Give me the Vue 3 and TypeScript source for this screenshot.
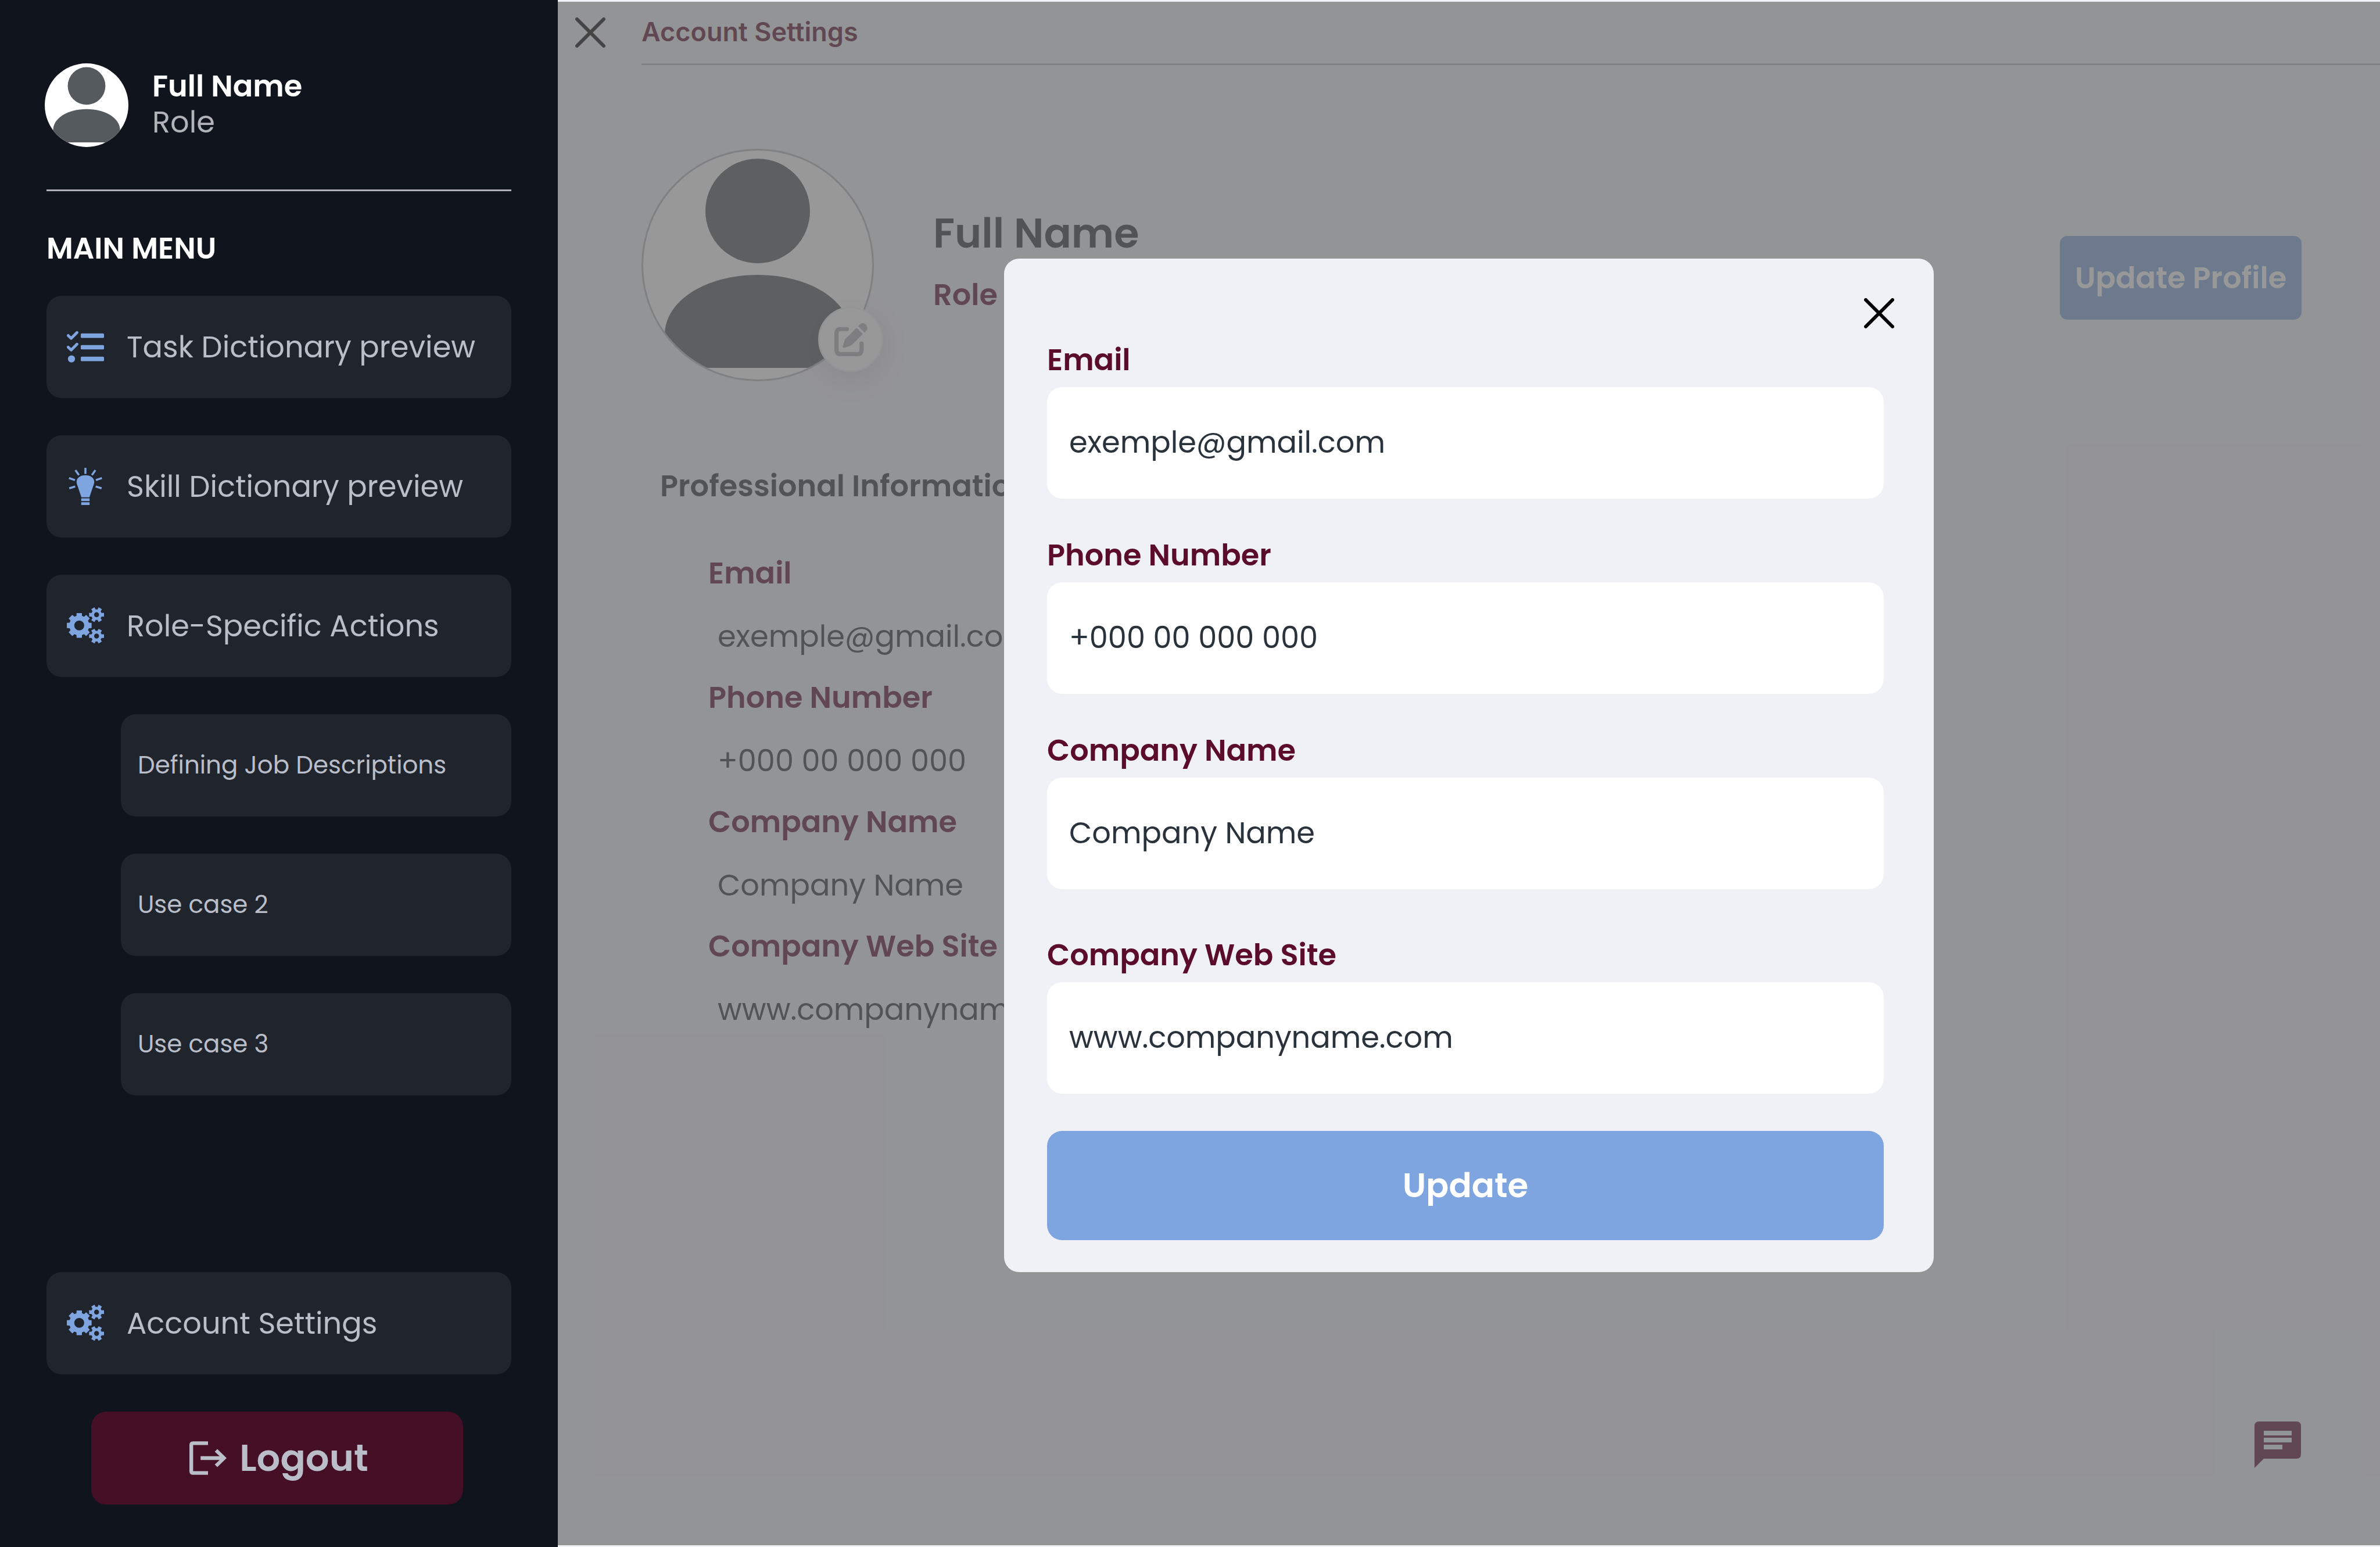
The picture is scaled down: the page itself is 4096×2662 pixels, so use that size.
<script setup lang="ts">
import { ref } from 'vue'

interface Field {
  id: string
  label: string
  type: string
  value: string
}

const fields = ref<Field[]>([
  { id: 'email', label: 'Email', type: 'email', value: 'exemple@gmail.com' },
  { id: 'phone', label: 'Phone Number', type: 'tel', value: '+000 00 000 000' },
  { id: 'company', label: 'Company Name', type: 'text', value: 'Company Name' },
  { id: 'website', label: 'Company Web Site', type: 'text', value: 'www.companyname.com' },
])

const useCases: string[] = ['Defining Job Descriptions', 'Use case 2', 'Use case 3']

// Outline of a cog wheel with a round hole, teeth spread evenly from the right-hand side.
function gear(
  cx: number, cy: number, teeth: number, outer: number, inner: number,
  hole: number, tip: number, base: number,
): string {
  const at = (r: number, deg: number): string => {
    const a = (deg * Math.PI) / 180
    return `${(cx + r * Math.cos(a)).toFixed(2)} ${(cy + r * Math.sin(a)).toFixed(2)}`
  }
  const points: string[] = []
  for (let i = 0; i < teeth; i++) {
    const mid = (360 / teeth) * i
    points.push(at(inner, mid - base), at(outer, mid - tip), at(outer, mid + tip), at(inner, mid + base))
  }
  return `M${points.join('L')}ZM${cx - hole} ${cy}a${hole} ${hole} 0 1 0 ${2 * hole} 0a${hole} ${hole} 0 1 0 ${-2 * hole} 0Z`
}

const gearsPath: string = [
  gear(26.7, 39, 8, 27.2, 21.5, 10.7, 12, 16),
  gear(64, 16, 6, 16.5, 11.5, 5.3, 14, 20),
  gear(64, 62, 6, 16.5, 11.5, 5.3, 14, 20),
].join('')
</script>

<template>
  <div class="layout">
    <aside class="sidebar">
      <div class="user">
        <svg class="user-avatar" viewBox="0 0 400 400" aria-hidden="true">
          <defs>
            <clipPath id="user-clip"><circle cx="200" cy="200" r="200" /></clipPath>
          </defs>
          <circle cx="200" cy="200" r="200" fill="#fff" />
          <g clip-path="url(#user-clip)" fill="#545a5e">
            <circle cx="200" cy="108" r="90" />
            <path d="M40 320C40 262 110 219 200 219S360 262 360 320V378H40Z" />
          </g>
        </svg>
        <div class="user-text">
          <p class="user-name">Full Name</p>
          <p class="user-role">Role</p>
        </div>
      </div>

      <hr class="divider" />
      <h2 class="menu-title">MAIN MENU</h2>

      <nav class="menu">
        <a class="item" href="#tasks">
          <svg class="icon" viewBox="0 0 80 80" aria-hidden="true">
            <g fill="none" stroke="currentColor" stroke-width="6" stroke-linejoin="round" stroke-linecap="round">
              <path d="M3 15.500L9.300 21.500L21.800 9" />
              <path d="M3 40.500L9.300 46.500L21.800 34" />
            </g>
            <g fill="currentColor">
              <circle cx="10" cy="65.700" r="7.700" />
              <rect x="30" y="11" width="50" height="9.600" rx="2" />
              <rect x="30" y="35.800" width="50" height="9.600" rx="2" />
              <rect x="30" y="61" width="50" height="9.600" rx="2" />
            </g>
          </svg>
          <span>Task Dictionary preview</span>
        </a>
        <a class="item" href="#skills">
          <svg class="icon" viewBox="0 0 80 80" aria-hidden="true">
            <path fill="currentColor" d="M40 16C51 16 59 22 59 30C59 34 58 36 56.500 40L48.600 63.500H31.400L23.500 40C22 36 21 34 21 30C21 22 29 16 40 16Z" />
            <path fill="currentColor" d="M31 65.500H49V71.500H31ZM31 74H49V80H31Z" />
            <path fill="none" stroke="currentColor" stroke-width="4.400" d="M40 0V13M18.500 5L26 15.500M61.500 5L54 15.500M4.600 22L17.500 26.500M75.400 22L62.500 26.500M5.200 44L18 40.200M74.800 44L62 40.200" />
          </svg>
          <span>Skill Dictionary preview</span>
        </a>
        <a class="item" href="#actions">
          <svg class="icon" viewBox="0 0 80 80" aria-hidden="true">
            <path :d="gearsPath" fill="currentColor" fill-rule="evenodd" />
          </svg>
          <span>Role-Specific Actions</span>
        </a>
        <a v-for="name in useCases" :key="name" class="item sub" href="#actions">{{ name }}</a>
      </nav>

      <div class="sidebar-foot">
        <a class="item" href="#account">
          <svg class="icon" viewBox="0 0 80 80" aria-hidden="true">
            <path :d="gearsPath" fill="currentColor" fill-rule="evenodd" />
          </svg>
          <span>Account Settings</span>
        </a>
        <button class="logout" type="button">
          <svg class="logout-icon" viewBox="0 0 80 72" aria-hidden="true">
            <path fill="currentColor" d="M40 0V8H8V64H40V72H8Q0 72 0 64V8Q0 0 8 0ZM60 16.500L80 36L60 55.500L54.500 49.800L65 40H24V32H65L54.500 22.200Z" />
          </svg>
          <span>Logout</span>
        </button>
      </div>
    </aside>

    <main class="main">
      <header class="topbar">
        <button class="close" type="button" aria-label="Close settings">
          <svg viewBox="0 0 52 52" aria-hidden="true">
            <path d="M3 3L49 49M49 3L3 49" fill="none" stroke="#000" stroke-width="6" stroke-linecap="round" />
          </svg>
        </button>
        <h1 class="topbar-title">Account Settings</h1>
      </header>

      <section class="profile">
        <div class="photo">
          <svg class="photo-image" viewBox="0 0 400 400" aria-hidden="true">
            <defs>
              <clipPath id="photo-clip"><circle cx="200" cy="200" r="198" /></clipPath>
            </defs>
            <circle cx="200" cy="200" r="198" fill="#fff" />
            <g clip-path="url(#photo-clip)" fill="#4e5457">
              <circle cx="200" cy="107" r="90" />
              <path d="M40 320C40 262 110 217 200 217S360 262 360 320V377H40Z" />
            </g>
            <circle cx="200" cy="200" r="198.500" fill="none" stroke="#b4b5bb" stroke-width="3" />
          </svg>
          <button class="edit" type="button" aria-label="Edit photo">
            <svg class="edit-icon" viewBox="0 0 214 214" aria-hidden="true">
              <path d="M81 38.500H40Q13.500 38.500 13.500 65V174Q13.500 200.500 40 200.500H149Q175.500 200.500 175.500 174V132" fill="none" stroke="currentColor" stroke-width="27" stroke-linecap="round" />
              <path d="M153 19L163 9Q183 -9 204 9Q222 30 206 49L194 61Z" fill="currentColor" />
              <path d="M144 30L184 70L116 138Q111 143 104 146L66 159Q52 162 54 149L67 110Q70 103 75 99Z" fill="currentColor" />
            </svg>
          </button>
        </div>
        <div class="profile-text">
          <h2 class="profile-name">Full Name</h2>
          <p class="profile-role">Role</p>
        </div>
        <button class="update-profile" type="button">Update Profile</button>
      </section>

      <section class="info">
        <h3 class="info-title">Professional Information</h3>
        <dl class="info-list">
          <template v-for="field in fields" :key="field.id">
            <dt>{{ field.label }}</dt>
            <dd>{{ field.value }}</dd>
          </template>
        </dl>
      </section>

      <button class="chat" type="button" aria-label="Open chat">
        <svg viewBox="0 0 100 100" aria-hidden="true">
          <path fill="currentColor" fill-rule="evenodd" d="M10 0H90Q100 0 100 10V70Q100 80 90 80H20L0 100V10Q0 0 10 0ZM20 20V30H80V20ZM20 35V45H80V35ZM20 50V60H60V50Z" />
        </svg>
      </button>

      <div class="overlay">
        <div class="modal" role="dialog" aria-modal="true" aria-label="Update profile">
          <div class="modal-head">
            <button class="close" type="button" aria-label="Close dialog">
              <svg viewBox="0 0 52 52" aria-hidden="true">
                <path d="M3 3L49 49M49 3L3 49" fill="none" stroke="#000" stroke-width="6" stroke-linecap="round" />
              </svg>
            </button>
          </div>
          <form class="form" @submit.prevent>
            <div v-for="field in fields" :key="field.id" class="field">
              <label :for="field.id">{{ field.label }}</label>
              <input :id="field.id" v-model="field.value" :type="field.type" />
            </div>
            <button class="submit" type="submit">Update</button>
          </form>
        </div>
      </div>
    </main>
  </div>
</template>

<style>
body {
  margin: 0;
  background: #f0f1f6;
}
</style>

<style scoped>
.layout {
  display: grid;
  grid-template-columns: 960px 1fr;
  min-height: 100vh;
  font-family: Poppins, Inter, sans-serif;
  font-size: 51px;
  line-height: 62px;
  color: #2a323c;
}

.layout * {
  box-sizing: border-box;
}

p,
h1,
h2,
h3,
dl,
dd {
  margin: 0;
}

button,
input {
  font: inherit;
  border: 0;
}

button {
  padding: 0;
  background: none;
  cursor: pointer;
}

svg {
  display: block;
}

/* Sidebar */
.sidebar {
  display: flex;
  flex-direction: column;
  padding: 109px 80px 73px;
  background: #10141c;
}

.user {
  display: flex;
  align-items: center;
  gap: 41px;
  margin-left: -3px;
}

.user-avatar {
  width: 144px;
  height: 144px;
}

.user-text {
  padding-bottom: 4px;
}

.user-name {
  font-weight: 600;
  color: #fff;
}

.user-role {
  color: #b0b3b8;
}

.divider {
  width: 100%;
  height: 3px;
  margin: 73px 0 67px;
  border: 0;
  background: #b0b1b9;
}

.menu-title {
  margin-bottom: 51px;
  font-size: 51px;
  font-weight: 600;
  color: #fff;
}

.menu,
.sidebar-foot {
  display: flex;
  flex-direction: column;
  gap: 64px;
}

.item {
  display: flex;
  align-items: center;
  gap: 39px;
  height: 176px;
  padding: 0 35px;
  border-radius: 26px;
  background: #20242c;
  color: #babec9;
  text-decoration: none;
  white-space: nowrap;
}

.icon {
  flex: none;
  width: 64px;
  height: 64px;
  color: #7ea5e0;
}

.sub {
  margin-left: 128px;
  padding: 0 29px;
  font-size: 42px;
}

.sidebar-foot {
  margin-top: auto;
}

.logout {
  display: flex;
  align-items: center;
  justify-content: center;
  gap: 22px;
  height: 160px;
  margin: 0 83px 0 77px;
  padding-left: 6px;
  border-radius: 26px;
  background: #450f26;
  font-size: 64px;
  font-weight: 600;
  color: #babec9;
}

.logout-icon {
  width: 64px;
  height: 58px;
}

/* Main page */
.main {
  position: relative;
  min-width: 0;
}

.topbar {
  display: flex;
  align-items: center;
  gap: 62px;
  padding-left: 30px;
}

.close {
  flex: none;
  width: 52px;
  height: 52px;
}

.topbar-title {
  flex: 1;
  border-bottom: 3px solid #b4b5bb;
  font-family: Inter, sans-serif;
  font-size: 45px;
  font-weight: 600;
  line-height: 109px;
  color: #5a0c2a;
}

.profile {
  display: flex;
  align-items: flex-start;
  padding: 144px 135px 0 144px;
}

.photo {
  position: relative;
  flex: none;
  width: 400px;
  height: 400px;
}

.photo-image {
  width: 100%;
  height: 100%;
}

.edit {
  position: absolute;
  right: -16px;
  bottom: 16px;
  display: grid;
  place-items: center;
  width: 112px;
  height: 112px;
  border: 3px solid #f0f1f6;
  border-radius: 50%;
  background: #fff;
  box-shadow: 0 13px 48px rgba(0, 0, 0, 0.12);
  color: #b0b1b9;
}

.edit-icon {
  width: 57px;
  height: 57px;
}

.profile-text {
  flex: 1;
  padding: 104px 0 0 102px;
}

.profile-name {
  margin-bottom: 32px;
  font-size: 70px;
  font-weight: 600;
  line-height: 84px;
}

.profile-role {
  font-weight: 600;
  color: #5a0c2a;
}

.update-profile {
  width: 416px;
  height: 144px;
  margin-top: 150px;
  border-radius: 13px;
  background: #7ea5e0;
  font-weight: 600;
  color: #fff;
}

.info {
  padding: 149px 0 0 176px;
}

.info-title {
  font-size: 51px;
  font-weight: 600;
}

.info-list {
  margin: 66px 0 0 83px;
  line-height: 107px;
}

.info-list dt {
  font-weight: 600;
  color: #5a0c2a;
}

.info-list dd {
  padding: 4px 0 0 16px;
  line-height: 103px;
}

.chat {
  position: absolute;
  right: 136px;
  bottom: 136px;
  width: 80px;
  height: 80px;
  color: #5a0c2a;
}

/* Dialog */
.overlay {
  position: absolute;
  inset: 3px 0;
  display: flex;
  align-items: center;
  justify-content: center;
  padding-bottom: 28px;
  background: rgba(101, 101, 101, 0.67);
}

.modal {
  width: 1600px;
  max-width: 100%;
  border-radius: 26px;
  background: #f0f1f6;
}

.modal-head {
  display: flex;
  justify-content: flex-end;
  padding: 68px 68px 0;
}

.form {
  display: flex;
  flex-direction: column;
  padding: 23px 86px 55px 74px;
}

.field {
  display: flex;
  flex-direction: column;
  gap: 16px;
  margin-bottom: 66px;
}

.field:nth-of-type(3) {
  margin-bottom: 82px;
}

.field:last-of-type {
  margin-bottom: 64px;
}

.field label {
  font-weight: 600;
  color: #5a0c2a;
}

.field input {
  width: 100%;
  height: 192px;
  padding: 0 38px 2px;
  border-radius: 26px;
  background: #fff;
  color: #2a323c;
}

.submit {
  height: 188px;
  border-radius: 26px;
  background: #7ea5e0;
  font-size: 58px;
  font-weight: 600;
  color: #fff;
}
</style>
